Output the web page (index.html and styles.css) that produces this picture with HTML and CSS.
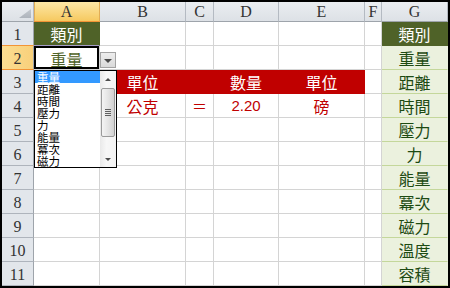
FILE: index.html
```
<!DOCTYPE html>
<html>
<head>
<meta charset="utf-8">
<link rel="stylesheet" href="styles.css">
</head>
<body>
<div class="sheet">
  <div class="ch corner"></div>
  <div class="ch sel">A</div><div class="ch">B</div><div class="ch">C</div><div class="ch">D</div><div class="ch">E</div><div class="ch">F</div><div class="ch">G</div>

  <div class="rh pre">1</div><div class="c olive a1">類別</div><div class="c"></div><div class="c"></div><div class="c"></div><div class="c"></div><div class="c"></div><div class="c olive">類別</div>
  <div class="rh sel">2</div><div class="c cur">重量</div><div class="c"></div><div class="c"></div><div class="c"></div><div class="c"></div><div class="c"></div><div class="c g">重量</div>
  <div class="rh">3</div><div class="c"></div><div class="c red">單位</div><div class="c red"></div><div class="c red">數量</div><div class="c red">單位</div><div class="c"></div><div class="c g">距離</div>
  <div class="rh">4</div><div class="c"></div><div class="c rt">公克</div><div class="c rt eq">＝</div><div class="c rt num">2.20</div><div class="c rt">磅</div><div class="c"></div><div class="c g">時間</div>
  <div class="rh">5</div><div class="c"></div><div class="c"></div><div class="c"></div><div class="c"></div><div class="c"></div><div class="c"></div><div class="c g">壓力</div>
  <div class="rh">6</div><div class="c"></div><div class="c"></div><div class="c"></div><div class="c"></div><div class="c"></div><div class="c"></div><div class="c g">力</div>
  <div class="rh">7</div><div class="c"></div><div class="c"></div><div class="c"></div><div class="c"></div><div class="c"></div><div class="c"></div><div class="c g">能量</div>
  <div class="rh">8</div><div class="c"></div><div class="c"></div><div class="c"></div><div class="c"></div><div class="c"></div><div class="c"></div><div class="c g">冪次</div>
  <div class="rh">9</div><div class="c"></div><div class="c"></div><div class="c"></div><div class="c"></div><div class="c"></div><div class="c"></div><div class="c g">磁力</div>
  <div class="rh">10</div><div class="c"></div><div class="c"></div><div class="c"></div><div class="c"></div><div class="c"></div><div class="c"></div><div class="c g">溫度</div>
  <div class="rh">11</div><div class="c"></div><div class="c"></div><div class="c"></div><div class="c"></div><div class="c"></div><div class="c"></div><div class="c g">容積</div>

  <div class="dd-btn"><span class="tri-down"></span></div>
  <div class="dd-list">
    <ul class="items">
      <li class="hi">重量</li>
      <li>距離</li>
      <li>時間</li>
      <li>壓力</li>
      <li>力</li>
      <li>能量</li>
      <li>冪次</li>
      <li>磁力</li>
    </ul>
    <div class="sb">
      <div class="sb-btn"><span class="tri-up-s"></span></div>
      <div class="sb-track">
        <div class="thumb"><span class="grip"></span></div>
      </div>
      <div class="sb-btn"><span class="tri-down-s"></span></div>
    </div>
  </div>
</div>
</body>
</html>
```
FILE: styles.css
```
html, body {
  margin: 0;
  padding: 0;
  background: #fff;
}

.sheet {
  width: 450px;
  height: 288px;
  box-sizing: border-box;
  border: 2px solid #000;
  display: grid;
  grid-template-columns: 32px 66px 86px 28px 65px 86px 17px 66px;
  grid-template-rows: 20px repeat(11, 24px);
  position: relative;
  overflow: hidden;
  background: #fff;
}

.ch, .rh, .c {
  box-sizing: border-box;
  display: flex;
  align-items: center;
  justify-content: center;
  white-space: nowrap;
}

.ch {
  background: linear-gradient(#eaedf1, #dde1e6);
  border-right: 1px solid #b4bac2;
  border-bottom: 1px solid #9ea4ab;
  font: 16px "Liberation Serif", serif;
  color: #333;
  padding-top: 1px;
}

.ch.sel {
  background: linear-gradient(#fde7a6, #f6c960);
  border-bottom-color: #f29436;
  border-right-color: #e2ad55;
  box-shadow: inset 1px 0 0 #e2ad55;
}

.ch.corner {
  justify-content: flex-end;
  align-items: flex-end;
  padding: 0 2px 3px 0;
}

.ch.corner::after {
  content: "";
  width: 12px;
  height: 9px;
  background: linear-gradient(#c3c8ce, #aeb4bc);
  clip-path: polygon(100% 0, 100% 100%, 0 100%);
}

.rh {
  background: #e2e6eb;
  border-right: 1px solid #9ea4ab;
  border-bottom: 1px solid #aeb4bc;
  font: 16px "Liberation Serif", serif;
  color: #333;
  padding-top: 2px;
}

.rh.pre {
  border-bottom-color: #f29436;
}

.rh.sel {
  background: linear-gradient(90deg, #fbdd92, #f8d07a);
  border-bottom-color: #f29436;
}

.c {
  border-right: 1px solid #d4d4d4;
  border-bottom: 1px solid #d4d4d4;
  font: 16px "Noto Sans CJK TC", sans-serif;
  line-height: 1;
}

.c.olive {
  background: #4f6228;
  color: #fff;
  border-color: #4f6228;
}

.c.a1 {
  border-bottom-color: #a49cc6;
}

.c.cur {
  color: #4f6228;
  box-shadow: inset 0 0 0 2px #000;
  padding-top: 2px;
}

.c.red {
  background: #c00000;
  border-color: #c00000;
  color: #fff;
}

.c.rt {
  color: #c00000;
}

.c.eq {
  font-size: 15px;
}

.c.num {
  font: 15px "Liberation Sans", Arial, sans-serif;
}

.c.g {
  background: #ebf1de;
  color: #1d4a12;
  border-bottom-color: #c4d79b;
  border-right-color: #ebf1de;
}

/* dropdown button */
.dd-btn {
  position: absolute;
  left: 98px;
  top: 50px;
  width: 16px;
  height: 16px;
  box-sizing: border-box;
  border: 1px solid #a3a3a3;
  background: linear-gradient(#ededed, #dadada);
  display: flex;
  align-items: center;
  justify-content: center;
}

.tri-down {
  width: 0;
  height: 0;
  border-left: 4px solid transparent;
  border-right: 4px solid transparent;
  border-top: 4px solid #4a4a4a;
  margin-top: 1px;
}

/* dropdown list */
.dd-list {
  position: absolute;
  left: 32px;
  top: 68px;
  width: 83px;
  height: 98px;
  box-sizing: border-box;
  border: 1px solid #000;
  background: #fff;
  display: flex;
}

.items {
  list-style: none;
  margin: 0;
  padding: 0;
  width: 65px;
  font: 11.5px "Noto Sans CJK TC", sans-serif;
  line-height: 12px;
  color: #000;
}

.items li {
  height: 12px;
  padding-left: 2px;
  white-space: nowrap;
  display: flex;
  align-items: center;
}

.items li.hi {
  background: #3399ff;
  color: #fff;
}

.sb {
  width: 16px;
  display: flex;
  flex-direction: column;
  background: linear-gradient(90deg, #e9e9e9, #f7f7f7 40%, #f3f3f3);
}

.sb-btn {
  height: 16px;
  display: flex;
  align-items: center;
  justify-content: center;
}

.tri-up-s {
  width: 0;
  height: 0;
  border-left: 3px solid transparent;
  border-right: 3px solid transparent;
  border-bottom: 3px solid #4d4d4d;
}

.tri-down-s {
  width: 0;
  height: 0;
  border-left: 3px solid transparent;
  border-right: 3px solid transparent;
  border-top: 3px solid #4d4d4d;
}

.sb-track {
  flex: 1;
  padding: 1px 1px 0 1px;
}

.thumb {
  height: 49px;
  box-sizing: border-box;
  border: 1px solid #9a9a9a;
  border-radius: 2px;
  background: linear-gradient(90deg, #f4f4f4, #e4e4e4 50%, #d2d2d2);
  display: flex;
  align-items: center;
  justify-content: center;
}

.grip {
  width: 6px;
  height: 7px;
  background: repeating-linear-gradient(#5f5f5f 0 1px, transparent 1px 2px);
}
```
